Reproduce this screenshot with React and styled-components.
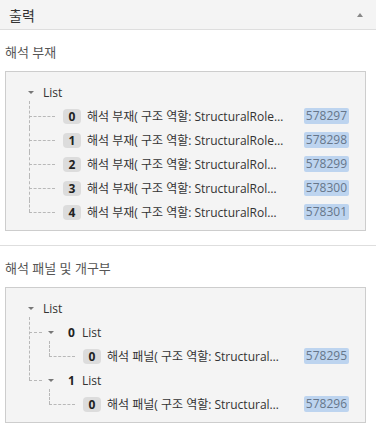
import React from 'react';
import styled, { createGlobalStyle } from 'styled-components';

const GlobalStyle = createGlobalStyle`
  body {
    margin: 0;
    background: #fff;
    font-family: "Open Sans", "Noto Sans CJK KR", sans-serif;
  }
`;

const Panel = styled.div`
  width: 376px;
  height: 432px;
  overflow: hidden;
  background: #fff;
`;

const Header = styled.div`
  display: flex;
  align-items: center;
  justify-content: space-between;
  height: 29px;
  padding: 0 13px 0 9px;
  background: #f4f4f4;
  border-bottom: 1px solid #dedede;
  font-size: 14px;
  color: #333;
`;

const Caret = styled.span`
  width: 0;
  height: 0;
  border-left: 3.5px solid transparent;
  border-right: 3.5px solid transparent;
  border-bottom: 4px solid #888;
`;

const Section = styled.section`
  padding: 12px 10px 14px 5px;
  & + & {
    border-top: 1px solid #dedede;
  }
`;

const Title = styled.div`
  font-size: 13px;
  line-height: 20px;
  color: #555;
  margin-bottom: 9px;
`;

const Box = styled.div`
  background: #f4f4f4;
  border: 1px solid #cdcdcd;
  padding: 8px 0 6px;
`;

const Row = styled.div`
  display: flex;
  align-items: center;
  height: 24px;
  padding-left: ${p => p.$pad || 0}px;
  font-size: 12px;
  color: #333;
  white-space: nowrap;
`;

const Toggle = styled.span`
  flex: none;
  width: 0;
  height: 0;
  margin-right: 9px;
  border-left: 3px solid transparent;
  border-right: 3px solid transparent;
  border-top: 3px solid #777;
`;

const ListIndex = styled.span`
  margin: 0 7px 0 5px;
  font-weight: 700;
  color: #222;
`;

const Children = styled.ul`
  list-style: none;
  margin: 0 0 0 ${p => p.$offset}px;
  padding: 0;
`;

const Item = styled.li`
  position: relative;
  padding-left: ${p => p.$pad}px;

  &::before {
    content: '';
    position: absolute;
    left: 0;
    top: 12px;
    width: ${p => p.$conn}px;
    border-top: 1px dashed #b8b8b8;
  }
  &::after {
    content: '';
    position: absolute;
    left: 0;
    top: 0;
    bottom: 0;
    border-left: 1px dashed #b8b8b8;
  }
  &:first-child::after {
    top: -3px;
  }
  &:last-child::after {
    bottom: auto;
    height: 12px;
  }
  &:first-child:last-child::after {
    height: 15px;
  }
`;

const IndexBadge = styled.span`
  flex: none;
  min-width: 18px;
  height: 15px;
  line-height: 15px;
  box-sizing: border-box;
  padding: 0 5px;
  border-radius: 4px;
  background: #dcdcdc;
  font-weight: 700;
  color: #222;
  text-align: center;
`;

const Text = styled.span`
  flex: 1;
  min-width: 0;
  margin-left: 6px;
  overflow: hidden;
  text-overflow: ellipsis;
`;

const IdBadge = styled.span`
  flex: none;
  height: 16px;
  line-height: 16px;
  padding: 0 2px;
  margin-right: 16px;
  border-radius: 2px;
  background: #bdd4ef;
  color: #66768a;
`;

const Leaf = ({ node }) => (
  <Row>
    <IndexBadge>{node.index}</IndexBadge>
    <Text>{node.text}</Text>
    <IdBadge>{node.id}</IdBadge>
  </Row>
);

const ListNode = ({ node, nested }) => (
  <>
    <Row $pad={nested ? 0 : 22}>
      <Toggle />
      {nested && <ListIndex>{node.index}</ListIndex>}
      <span>List</span>
    </Row>
    <Children $offset={nested ? 1 : 23}>
      {node.items.map(child =>
        child.items ? (
          <Item key={child.index} $pad={19} $conn={13}>
            <ListNode node={child} nested />
          </Item>
        ) : (
          <Item key={child.index} $pad={34} $conn={26}>
            <Leaf node={child} />
          </Item>
        )
      )}
    </Children>
  </>
);

const members = {
  items: [
    { index: 0, text: '해석 부재( 구조 역할: StructuralRole…', id: 578297 },
    { index: 1, text: '해석 부재( 구조 역할: StructuralRole…', id: 578298 },
    { index: 2, text: '해석 부재( 구조 역할: StructuralRol…', id: 578299 },
    { index: 3, text: '해석 부재( 구조 역할: StructuralRol…', id: 578300 },
    { index: 4, text: '해석 부재( 구조 역할: StructuralRol…', id: 578301 },
  ],
};

const panels = {
  items: [
    { index: 0, items: [{ index: 0, text: '해석 패널( 구조 역할: Structural…', id: 578295 }] },
    { index: 1, items: [{ index: 0, text: '해석 패널( 구조 역할: Structural…', id: 578296 }] },
  ],
};

export default function App() {
  return (
    <Panel>
      <GlobalStyle />
      <Header>
        <span>출력</span>
        <Caret />
      </Header>
      <Section>
        <Title>해석 부재</Title>
        <Box>
          <ListNode node={members} />
        </Box>
      </Section>
      <Section>
        <Title>해석 패널 및 개구부</Title>
        <Box>
          <ListNode node={panels} />
        </Box>
      </Section>
    </Panel>
  );
}
